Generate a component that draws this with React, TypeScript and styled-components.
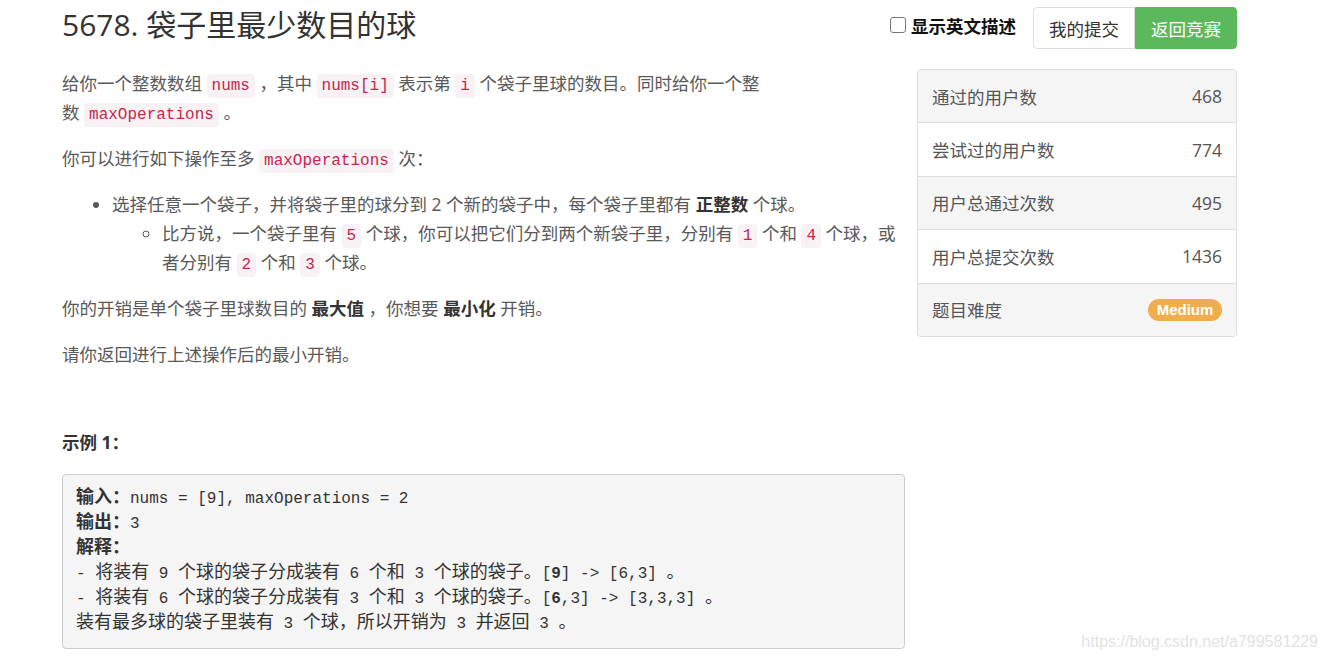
import styled, { createGlobalStyle } from "styled-components";

const GlobalStyle = createGlobalStyle`
  body {
    margin: 0;
    background: #fff;
    font-family: "Open Sans", "Noto Sans CJK SC", sans-serif;
  }
`;

const Page = styled.div`
  position: relative;
  width: 1328px;
  height: 661px;
  padding: 7px 0 0 62px;
  box-sizing: border-box;
  overflow: hidden;
`;

const Header = styled.div`
  width: 1175px;
  height: 42px;
  display: flex;
  justify-content: space-between;
  align-items: center;
  margin-bottom: 20px;
`;

const Title = styled.h1`
  margin: -6px 0 0;
  font-size: 30px;
  line-height: 36px;
  font-weight: 400;
  color: #333;
`;

const Actions = styled.div`
  display: flex;
  align-items: center;
  gap: 17px;
`;

const Toggle = styled.label`
  display: flex;
  align-items: center;
  gap: 5px;
  margin-top: -6px;
  font-size: 17.5px;
  font-weight: 700;
  color: #111;
`;

const CheckBox = styled.span`
  width: 14px;
  height: 14px;
  border: 1px solid #777;
  border-radius: 3px;
  background: #fff;
`;

const ButtonGroup = styled.div`
  display: flex;
`;

const Button = styled.button<{ $primary?: boolean }>`
  width: 102px;
  height: 42px;
  font-family: inherit;
  font-size: 17.5px;
  border: 1px solid ${(p) => (p.$primary ? "#5cb85c" : "#ddd")};
  background: ${(p) => (p.$primary ? "#5cb85c" : "#fff")};
  color: ${(p) => (p.$primary ? "#fff" : "#333")};
  border-radius: ${(p) => (p.$primary ? "0 4px 4px 0" : "4px 0 0 4px")};
  padding: 0;
`;

const Body = styled.div`
  display: grid;
  grid-template-columns: 843px 320px;
  gap: 12px;
  align-items: start;
`;

const Desc = styled.div`
  font-size: 17.5px;
  line-height: 29px;
  color: #595959;

  p {
    margin: 0 0 17px;
  }
  strong {
    color: #333;
  }
`;

const Code = styled.code`
  font-family: "Liberation Mono", monospace;
  font-size: 16px;
  line-height: 1;
  padding: 3px 5px;
  border-radius: 4px;
  background: #f9f2f4;
  color: #c7254e;
`;

const List = styled.ul<{ $nested?: boolean }>`
  margin: 0 0 ${(p) => (p.$nested ? "0" : "17px")};
  padding-left: 50px;
  list-style: ${(p) => (p.$nested ? "circle" : "disc")};
`;

const ExampleTitle = styled.p`
  && {
    margin: 59px 0 16.5px;
  }
  font-weight: 700;
  color: #333;
`;

const Pre = styled.div`
  padding: 11.5px 13px 12px;
  border: 1px solid #ccc;
  border-radius: 4px;
  background: #f5f5f5;
  font-family: "Liberation Mono", monospace;
  font-size: 16px;
  color: #333;
`;

const PreLine = styled.div`
  height: 25px;
  line-height: 25px;
  white-space: pre;
  overflow: visible;
`;

const Zh = styled.span`
  font-family: "Noto Sans CJK SC", sans-serif;
  font-size: 18px;
  line-height: 1;
`;

const Side = styled.div`
  border: 1px solid #ddd;
  border-radius: 4px;
  overflow: hidden;
  font-size: 17.5px;
  color: #555;
`;

const SideRow = styled.div`
  height: 52.4px;
  padding: 0 14px;
  display: flex;
  align-items: center;
  justify-content: space-between;
  & + & {
    border-top: 1px solid #ddd;
  }
  &:nth-child(odd) {
    background: #f5f5f5;
  }
`;

const Badge = styled.span`
  display: inline-flex;
  align-items: center;
  justify-content: center;
  width: 74px;
  height: 22px;
  border-radius: 11px;
  background: #f0ad4e;
  color: #fff;
  font-family: "Liberation Sans", sans-serif;
  font-size: 15px;
  font-weight: 700;
`;

const Watermark = styled.div`
  position: absolute;
  right: 10px;
  bottom: 10px;
  font-family: "Liberation Sans", sans-serif;
  font-size: 16px;
  color: #e2e2e2;
`;

const stats = [
  { label: "通过的用户数", value: "468" },
  { label: "尝试过的用户数", value: "774" },
  { label: "用户总通过次数", value: "495" },
  { label: "用户总提交次数", value: "1436" },
];

export default function App() {
  return (
    <Page>
      <GlobalStyle />
      <Header>
        <Title>5678. 袋子里最少数目的球</Title>
        <Actions>
          <Toggle>
            <CheckBox />
            显示英文描述
          </Toggle>
          <ButtonGroup>
            <Button>我的提交</Button>
            <Button $primary>返回竞赛</Button>
          </ButtonGroup>
        </Actions>
      </Header>
      <Body>
        <Desc>
          <p>
            给你一个整数数组 <Code>nums</Code> ，其中 <Code>nums[i]</Code>{" "}
            表示第 <Code>i</Code> 个袋子里球的数目。同时给你一个整
            <br />数 <Code>maxOperations</Code> 。
          </p>
          <p>
            你可以进行如下操作至多 <Code>maxOperations</Code> 次：
          </p>
          <List>
            <li>
              选择任意一个袋子，并将袋子里的球分到 2 个新的袋子中，每个袋子里都有{" "}
              <strong>正整数</strong> 个球。
              <List $nested>
                <li>
                  比方说，一个袋子里有 <Code>5</Code> 个球，你可以把它们分到两个新袋子里，分别有{" "}
                  <Code>1</Code> 个和 <Code>4</Code> 个球，或者分别有 <Code>2</Code> 个和{" "}
                  <Code>3</Code> 个球。
                </li>
              </List>
            </li>
          </List>
          <p>
            你的开销是单个袋子里球数目的 <strong>最大值</strong> ，你想要{" "}
            <strong>最小化</strong> 开销。
          </p>
          <p>请你返回进行上述操作后的最小开销。</p>
          <ExampleTitle>示例 1：</ExampleTitle>
          <Pre>
            <PreLine>
              <strong>
                <Zh>输入：</Zh>
              </strong>
              nums = [9], maxOperations = 2
            </PreLine>
            <PreLine>
              <strong>
                <Zh>输出：</Zh>
              </strong>
              3
            </PreLine>
            <PreLine>
              <strong>
                <Zh>解释：</Zh>
              </strong>
            </PreLine>
            <PreLine>
              - <Zh>将装有</Zh> 9 <Zh>个球的袋子分成装有</Zh> 6 <Zh>个和</Zh> 3{" "}
              <Zh>个球的袋子。</Zh>[<strong>9</strong>] -&gt; [6,3] <Zh>。</Zh>
            </PreLine>
            <PreLine>
              - <Zh>将装有</Zh> 6 <Zh>个球的袋子分成装有</Zh> 3 <Zh>个和</Zh> 3{" "}
              <Zh>个球的袋子。</Zh>[<strong>6</strong>,3] -&gt; [3,3,3] <Zh>。</Zh>
            </PreLine>
            <PreLine>
              <Zh>装有最多球的袋子里装有</Zh> 3 <Zh>个球，所以开销为</Zh> 3 <Zh>并返回</Zh> 3{" "}
              <Zh>。</Zh>
            </PreLine>
          </Pre>
        </Desc>
        <Side>
          {stats.map((s) => (
            <SideRow key={s.label}>
              <span>{s.label}</span>
              <span>{s.value}</span>
            </SideRow>
          ))}
          <SideRow>
            <span>题目难度</span>
            <Badge>Medium</Badge>
          </SideRow>
        </Side>
      </Body>
      <Watermark>https://blog.csdn.net/a799581229</Watermark>
    </Page>
  );
}
